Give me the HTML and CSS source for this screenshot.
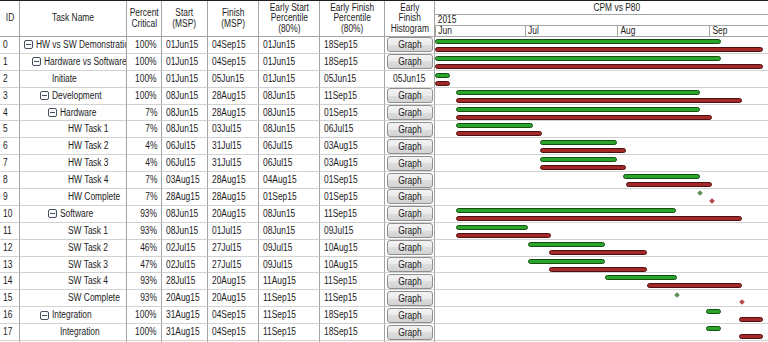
FILE: index.html
```html
<!DOCTYPE html>
<html lang="en">
<head>
  <meta charset="UTF-8" />
  <meta name="viewport" content="width=device-width, initial-scale=1" />
  <title>CPM vs P80</title>
  <link rel="stylesheet" href="styles.css">
</head>
<body>

  <div class="sheet">
    <div class="row head">
      <div class="cell"><span class="t">ID</span></div>
      <div class="cell"><span class="t">Task Name</span></div>
      <div class="cell"><span class="t">Percent<br>Critical</span></div>
      <div class="cell"><span class="t">Start<br>(MSP)</span></div>
      <div class="cell"><span class="t">Finish<br>(MSP)</span></div>
      <div class="cell"><span class="t">Early Start<br>Percentile<br>(80%)</span></div>
      <div class="cell"><span class="t">Early Finish<br>Percentile<br>(80%)</span></div>
      <div class="cell"><span class="t">Early<br>Finish<br>Histogram</span></div>
      <div class="timeline-head">
        <div class="chart-title"><span class="t">CPM vs P80</span></div>
        <div class="chart-year"><span class="t">2015</span></div>
        <div class="chart-months" id="months"></div>
      </div>
    </div>
    <div id="tasks"></div>
  </div>

  <script>
    // id, level, name, parent, critical, start, finish, early start, early finish, histogram
    const tasks = [
      [0, 0, "HW vs SW Demonstration", true, "100%", "01Jun15", "04Sep15", "01Jun15", "18Sep15"],
      [1, 1, "Hardware vs Software", true, "100%", "01Jun15", "04Sep15", "01Jun15", "18Sep15"],
      [2, 2, "Initiate", false, "100%", "01Jun15", "05Jun15", "01Jun15", "05Jun15", "05Jun15"],
      [3, 2, "Development", true, "100%", "08Jun15", "28Aug15", "08Jun15", "11Sep15"],
      [4, 3, "Hardware", true, "7%", "08Jun15", "28Aug15", "08Jun15", "01Sep15"],
      [5, 4, "HW Task 1", false, "7%", "08Jun15", "03Jul15", "08Jun15", "06Jul15"],
      [6, 4, "HW Task 2", false, "4%", "06Jul15", "31Jul15", "06Jul15", "03Aug15"],
      [7, 4, "HW Task 3", false, "4%", "06Jul15", "31Jul15", "06Jul15", "03Aug15"],
      [8, 4, "HW Task 4", false, "7%", "03Aug15", "28Aug15", "04Aug15", "01Sep15"],
      [9, 4, "HW Complete", false, "7%", "28Aug15", "28Aug15", "01Sep15", "01Sep15"],
      [10, 3, "Software", true, "93%", "08Jun15", "20Aug15", "08Jun15", "11Sep15"],
      [11, 4, "SW Task 1", false, "93%", "08Jun15", "01Jul15", "08Jun15", "09Jul15"],
      [12, 4, "SW Task 2", false, "46%", "02Jul15", "27Jul15", "09Jul15", "10Aug15"],
      [13, 4, "SW Task 3", false, "47%", "02Jul15", "27Jul15", "09Jul15", "10Aug15"],
      [14, 4, "SW Task 4", false, "93%", "28Jul15", "20Aug15", "11Aug15", "11Sep15"],
      [15, 4, "SW Complete", false, "93%", "20Aug15", "20Aug15", "11Sep15", "11Sep15"],
      [16, 2, "Integration", true, "100%", "31Aug15", "04Sep15", "11Sep15", "18Sep15"],
      [17, 3, "Integration", false, "100%", "31Aug15", "04Sep15", "11Sep15", "18Sep15"]
    ];

    const monthStart = { Jun: 0, Jul: 30, Aug: 61, Sep: 92 };
    const dayWidth = 2.978;

    function dayOf(date) {
      return monthStart[date.slice(2, 5)] + parseInt(date.slice(0, 2), 10) - 1;
    }

    function xOf(day) {
      return 0.3 + day * dayWidth;
    }

    function text(value) {
      const span = document.createElement("span");
      span.className = "t";
      span.textContent = value;
      return span;
    }

    function cell(className, value) {
      const div = document.createElement("div");
      div.className = "cell " + className;
      if (value) div.appendChild(text(value));
      return div;
    }

    function addBar(track, kind, start, finish) {
      const a = dayOf(start);
      const b = dayOf(finish);
      const el = document.createElement("div");
      if (a === b) {
        el.className = "milestone " + kind;
        el.style.left = xOf(b + 1).toFixed(1) + "px";
      } else {
        el.className = "bar " + kind;
        el.style.left = xOf(a).toFixed(1) + "px";
        el.style.width = (xOf(b + 1) - xOf(a)).toFixed(1) + "px";
      }
      track.appendChild(el);
    }

    const months = document.getElementById("months");
    Object.keys(monthStart).forEach(name => {
      const m = document.createElement("span");
      m.className = "month";
      m.appendChild(text(name));
      m.style.left = xOf(monthStart[name]).toFixed(1) + "px";
      months.appendChild(m);
    });

    const list = document.getElementById("tasks");

    tasks.forEach(t => {
      const [id, level, name, parent, critical, start, finish, earlyStart, earlyFinish, hist] = t;
      const row = document.createElement("div");
      row.className = "row";

      row.appendChild(cell("id", String(id)));

      const nameCell = cell("name lvl-" + level + (parent ? "" : " leaf"));
      if (parent) {
        const toggle = document.createElement("span");
        toggle.className = "toggle";
        nameCell.appendChild(toggle);
      }
      nameCell.appendChild(text(name));
      row.appendChild(nameCell);

      row.appendChild(cell("pct", critical));
      row.appendChild(cell("date", start));
      row.appendChild(cell("date", finish));
      row.appendChild(cell("date", earlyStart));
      row.appendChild(cell("date", earlyFinish));

      const histCell = cell("hist", hist || "");
      if (!hist) {
        const btn = document.createElement("button");
        btn.className = "graph";
        btn.appendChild(text("Graph"));
        histCell.appendChild(btn);
      }
      row.appendChild(histCell);

      const track = document.createElement("div");
      track.className = "track";
      addBar(track, "msp", start, finish);
      addBar(track, "p80", earlyStart, earlyFinish);
      row.appendChild(track);

      list.appendChild(row);
    });

    // empty row under the last task
    const filler = document.createElement("div");
    filler.className = "row";
    ["id", "name", "pct", "date", "date", "date", "date", "hist"].forEach(c => filler.appendChild(cell(c)));
    const emptyTrack = document.createElement("div");
    emptyTrack.className = "track";
    filler.appendChild(emptyTrack);
    list.appendChild(filler);
  </script>
</body>
</html>
```

FILE: styles.css
```css
body {
  margin: 0;
  background-color: #fff;
  color: #1c1c1c;
  font-family: "Liberation Sans", Arial, sans-serif;
  font-size: 10px;
  overflow: hidden;
}

/* the grid font is narrow, so every text is squeezed a little */
.t {
  display: inline-block;
  white-space: nowrap;
  transform: scaleX(0.84);
  transform-origin: left center;
}

.sheet {
  width: 798px;
  border-top: 1px solid #1e1e1e;
}

.row {
  display: grid;
  grid-template-columns: 20px 107px 35px 46px 51px 61px 65px 50px 363px;
  height: 16.9px;
}

.cell {
  box-sizing: border-box;
  border-right: 1px solid #a4a4a4;
  border-bottom: 1px solid #d2d2d2;
  padding: 0 4px;
  line-height: 15.9px;
  white-space: nowrap;
  overflow: hidden;
}

/* header */

.head {
  height: 36px;
}

.head .cell {
  display: flex;
  align-items: center;
  justify-content: center;
  text-align: center;
  line-height: 10.5px;
  padding: 0;
  border-bottom-color: #a4a4a4;
  overflow: visible;
}

.head .t,
.chart-title .t,
.hist .t {
  transform-origin: center;
}

.timeline-head {
  display: grid;
  grid-template-rows: 14px 11px 11px;
}

.chart-title,
.chart-year,
.chart-months {
  box-sizing: border-box;
  border-bottom: 1px solid #a4a4a4;
  white-space: nowrap;
  overflow: hidden;
}

.chart-title {
  text-align: center;
  line-height: 13px;
}

.chart-year {
  padding-left: 1px;
  line-height: 10px;
}

.chart-months {
  position: relative;
}

.month {
  position: absolute;
  top: 0;
  bottom: 0;
  padding-left: 1px;
  line-height: 10px;
  border-left: 1px solid #a9a296;
}

/* task cells */

.id {
  padding-left: 3px;
}

.name {
  display: flex;
  align-items: center;
}

.lvl-0 { padding-left: 4px; }
.lvl-1 { padding-left: 12px; }
.lvl-2 { padding-left: 20px; }
.lvl-3 { padding-left: 28px; }
.lvl-4 { padding-left: 36px; }

.leaf .t {
  margin-left: 12px;
}

.toggle {
  flex: none;
  position: relative;
  width: 9px;
  height: 9px;
  margin-right: 3px;
  box-sizing: border-box;
  border: 1px solid #46505e;
  border-radius: 2px;
  background-color: #fbfbfb;
}

.toggle::after {
  content: "";
  position: absolute;
  left: 1px;
  right: 1px;
  top: 3px;
  height: 1px;
  background-color: #46505e;
}

.pct {
  text-align: right;
  padding-right: 4px;
}

.pct .t {
  transform-origin: right center;
}

.date {
  padding-left: 4px;
}

.hist {
  display: flex;
  align-items: center;
  justify-content: center;
  padding: 0;
}

.graph {
  width: 46px;
  height: 15px;
  padding: 0;
  border: 1px solid #8f8f8f;
  border-radius: 3px;
  background: linear-gradient(#f3f3f3, #ebebeb 50%, #dedede 50%, #d2d2d2);
  color: #1c1c1c;
  font-family: inherit;
  font-size: 10px;
  line-height: 13px;
}

/* gantt */

.track {
  position: relative;
  box-sizing: border-box;
  border-bottom: 1px solid #d2d2d2;
}

.bar {
  position: absolute;
  height: 5px;
  box-sizing: border-box;
  border: 1px solid;
  border-radius: 3px;
}

.bar.msp {
  top: 2px;
  background-color: #2aa52a;
  border-color: #124f12;
}

.bar.p80 {
  top: 10px;
  background-color: #a32828;
  border-color: #4d1010;
}

.milestone {
  position: absolute;
  width: 4px;
  height: 4px;
  margin-left: -2px;
  transform: rotate(45deg);
}

.milestone.msp {
  top: 2.2px;
  background-color: #5d8f5d;
}

.milestone.p80 {
  top: 9.9px;
  background-color: #b24a4a;
}
```
